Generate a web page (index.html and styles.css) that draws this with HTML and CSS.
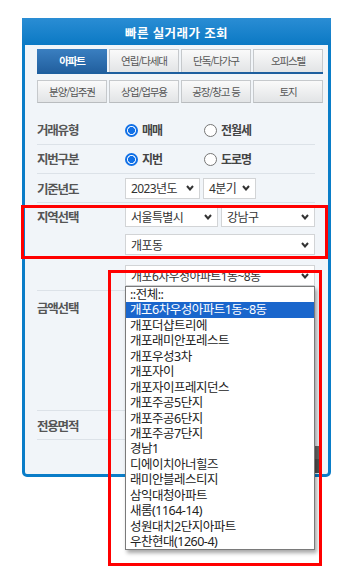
FILE: index.html
```html
<!DOCTYPE html>
<html lang="ko">
<head>
  <meta charset="UTF-8" />
  <title>빠른 실거래가 조회</title>
  <link rel="stylesheet" href="styles.css">
</head>
<body>
  <div class="page">
    <div class="panel">
      <div class="panel-head">빠른 실거래가 조회</div>

      <div class="tabs">
        <div class="tab-row main">
          <span class="tab on">아파트</span>
          <span class="tab">연립/다세대</span>
          <span class="tab">단독/다가구</span>
          <span class="tab">오피스텔</span>
        </div>
        <div class="tab-row">
          <span class="tab">분양/입주권</span>
          <span class="tab">상업/업무용</span>
          <span class="tab">공장/창고 등</span>
          <span class="tab">토지</span>
        </div>
      </div>

      <div class="form">
        <div class="row opts">
          <span class="label">거래유형</span>
          <span class="radio"><i class="dot on"></i>매매</span>
          <span class="radio"><i class="dot"></i>전월세</span>
        </div>
        <div class="row opts">
          <span class="label">지번구분</span>
          <span class="radio"><i class="dot on"></i>지번</span>
          <span class="radio"><i class="dot"></i>도로명</span>
        </div>
        <div class="row">
          <div class="label">기준년도</div>
          <div class="field">
            <div class="sel w-year">2023년도<svg width="8" height="6" viewBox="0 0 8 6"><polyline points="1,1 4,4.5 7,1" /></svg></div>
            <div class="sel w-qtr">4분기<svg width="8" height="6" viewBox="0 0 8 6"><polyline points="1,1 4,4.5 7,1" /></svg></div>
          </div>
        </div>
        <div class="row tall region">
          <div class="label">지역선택</div>
          <div class="field stack">
            <div class="pair">
              <div class="sel w-half">서울특별시<svg width="8" height="6" viewBox="0 0 8 6"><polyline points="1,1 4,4.5 7,1" /></svg></div>
              <div class="sel w-half2">강남구<svg width="8" height="6" viewBox="0 0 8 6"><polyline points="1,1 4,4.5 7,1" /></svg></div>
            </div>
            <div class="sel">개포동<svg width="8" height="6" viewBox="0 0 8 6"><polyline points="1,1 4,4.5 7,1" /></svg></div>
            <div class="sel apt">개포6차우성아파트1동~8동<svg width="8" height="6" viewBox="0 0 8 6"><polyline points="1,1 4,4.5 7,1" /></svg></div>
          </div>
        </div>
        <div class="row tall price">
          <div class="label">금액선택</div>
          <div class="field"></div>
        </div>
        <div class="row">
          <div class="label">전용면적</div>
          <div class="field"></div>
        </div>
      </div>

      <div class="actions">
        <span class="btn">검색</span>
      </div>
    </div>

    <div class="mark mark-region"></div>
    <div class="mark mark-apt"></div>

    <ul class="apt-list">
      <li>::전체::</li>
      <li class="on">개포6차우성아파트1동~8동</li>
      <li>개포더샵트리에</li>
      <li>개포래미안포레스트</li>
      <li>개포우성3차</li>
      <li>개포자이</li>
      <li>개포자이프레지던스</li>
      <li>개포주공5단지</li>
      <li>개포주공6단지</li>
      <li>개포주공7단지</li>
      <li>경남1</li>
      <li>디에이치아너힐즈</li>
      <li>래미안블레스티지</li>
      <li>삼익대청아파트</li>
      <li>새롬(1164-14)</li>
      <li>성원대치2단지아파트</li>
      <li>우찬현대(1260-4)</li>
    </ul>
  </div>
</body>
</html>
```

FILE: styles.css
```css
* {
  box-sizing: border-box;
}

body {
  margin: 0;
  font-family: "Noto Sans", "Noto Sans CJK KR", sans-serif;
  color: #333;
  background: #fff;
}

.page {
  position: relative;
  padding: 18px 0 0 22px;
  height: 567px;
  overflow: hidden;
  border-left: 2px solid #fff;
}

.panel {
  width: 309px;
  height: 459px;
  margin-left: -2px;
  border: 3px solid #0a7dc8;
  border-radius: 3px 3px 5px 5px;
  background: #f1f5f9;
}

.panel-head {
  margin: -3px -3px 0;
  padding-top: 3px;
  height: 27px;
  background: linear-gradient(#2a8dd4, #0b79c4);
  color: #fff;
  font-family: "Noto Sans CJK KR", sans-serif;
  font-size: 12.5px;
  font-weight: 700;
  letter-spacing: 0.4px;
  line-height: 24px;
  text-align: center;
}

.tabs {
  padding: 4px 0 0 12px;
}

.tab-row {
  display: flex;
  gap: 2px;
  width: 286px;
}

.tab-row.main {
  border-bottom: 2px solid #1d5f9f;
}

.tab-row + .tab-row {
  margin-top: 6px;
}

.tab {
  width: 70px;
  height: 23px;
  border: 1px solid #c6c9cc;
  border-bottom-color: #b9bcbf;
  background: linear-gradient(#fafafa, #e2e4e6);
  color: #555;
  font-family: "Noto Sans CJK KR", sans-serif;
  font-size: 10.5px;
  letter-spacing: -1.1px;
  line-height: 21px;
  text-align: center;
}

.main .tab {
  border-bottom: none;
}

.tab.on {
  border: none;
  background: linear-gradient(#3a7fc1, #22609f);
  color: #fff;
  font-weight: 700;
  line-height: 23px;
}

.form {
  position: relative;
  z-index: 1;
  width: 278px;
  margin: 13px 0 0 12px;
}

.row {
  display: flex;
  align-items: center;
  height: 29px;
  border-bottom: 1px solid #dce2e8;
}

/* radio rows in plain inline flow */
.row.opts {
  display: block;
  font-size: 0;
  white-space: nowrap;
}

.row.tall {
  align-items: flex-start;
}

.row.region {
  height: 88px;
  padding-top: 3px;
}

.row.price {
  height: 120px;
  padding-top: 8px;
}

.label {
  flex: none;
  width: 88px;
  color: #555;
  font-family: "Noto Sans CJK KR", sans-serif;
  font-size: 12.5px;
  font-weight: 700;
  letter-spacing: -1.2px;
  line-height: 21px;
}

.opts .label {
  display: inline-block;
  vertical-align: top;
  line-height: 28px;
}

.price .label {
  line-height: 18px;
}

.field {
  display: flex;
  align-items: center;
  gap: 3px;
  width: 190px;
}

.field.stack {
  flex-direction: column;
  align-items: stretch;
  gap: 0;
}

.radio {
  display: inline-block;
  vertical-align: top;
  width: 79px;
  height: 28px;
  color: #444;
  font-family: "Noto Sans CJK KR", sans-serif;
  font-size: 12px;
  font-weight: 700;
  letter-spacing: -1px;
  line-height: 28px;
}

.dot {
  display: inline-block;
  vertical-align: -2px;
  width: 13px;
  height: 13px;
  margin-right: 4px;
  border: 1px solid #767676;
  border-radius: 50%;
  background: #fff;
}

.dot.on {
  border: 2px solid #1170e6;
  background: radial-gradient(circle, #1170e6 0 3.2px, #fff 3.8px);
}

.sel {
  display: flex;
  align-items: center;
  justify-content: space-between;
  height: 21px;
  padding: 0 5px;
  border: 1px solid #d2d4d6;
  background: #fff;
  color: #333;
  font-size: 12px;
  letter-spacing: -0.6px;
  white-space: nowrap;
}

.sel svg {
  flex: none;
}

.sel polyline {
  fill: none;
  stroke: #333;
  stroke-width: 2;
}

.w-year {
  width: 75px;
}

.w-qtr {
  width: 53px;
}

.pair {
  display: flex;
  gap: 3px;
}

.w-half {
  width: 93px;
}

.w-half2 {
  width: 94px;
}

.pair + .sel {
  margin-top: 7px;
}

.sel.apt {
  margin-top: 10px;
}

.actions {
  display: flex;
  justify-content: flex-end;
  padding: 6px 6px 0 0;
}

.btn {
  width: 120px;
  height: 27px;
  background: linear-gradient(#6b6b6b 50%, #545454 50%);
  color: #fff;
  font-size: 12px;
  line-height: 27px;
  text-align: center;
}

.mark {
  position: absolute;
  z-index: 3;
  border: 3px solid #ff0000;
}

.mark-region {
  left: 19px;
  top: 205px;
  width: 307px;
  height: 54px;
}

.mark-apt {
  left: 106px;
  top: 270px;
  width: 214px;
  height: 296px;
}

.apt-list {
  position: absolute;
  z-index: 2;
  left: 123px;
  top: 286px;
  width: 190px;
  margin: 0;
  padding: 0;
  list-style: none;
  border: 1px solid #7a7a7a;
  background: #fff;
  box-shadow: 2px 3px 4px rgba(0, 0, 0, 0.35);
}

.apt-list li {
  height: 15.45px;
  padding-left: 4px;
  color: #222;
  font-size: 12.5px;
  letter-spacing: -0.5px;
  line-height: 15.45px;
  white-space: nowrap;
}

.apt-list li.on {
  background: #1a66cc;
  color: #fff;
}
```
